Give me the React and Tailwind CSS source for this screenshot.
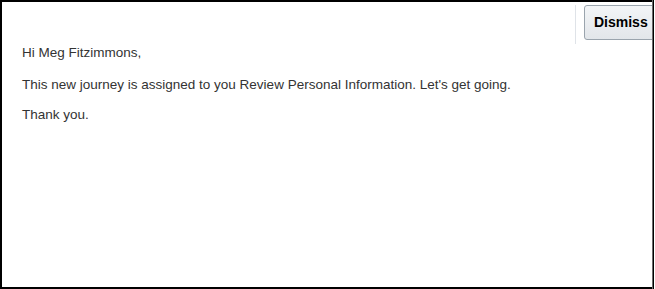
import React from "react";

const App = () => {
  return (
    <div className="w-[655px] h-[289px] bg-white flex font-['Liberation_Sans',Arial,sans-serif]">
      <div className="flex-1 flex border-l-2 border-t-2 border-b-2 border-black overflow-hidden">
        <div className="flex-1 pl-[20px] pt-[41px] text-[13.5px] leading-[20px] text-[#333333]">
          <p className="mb-[12px]">Hi Meg Fitzimmons,</p>
          <p className="mb-[10px]">
            This new journey is assigned to you Review Personal Information. Let's get going.
          </p>
          <p>Thank you.</p>
        </div>
        <div className="flex items-start">
          <div className="w-px h-[39px] mt-[3px] bg-[#dfe3e8]"></div>
          <button className="ml-[8px] mt-[3px] h-[35px] w-[74px] -mr-[6px] pl-[9px] text-left rounded-[3px] border border-[#9aa4ad] bg-gradient-to-b from-[#f3f5f7] to-[#e2e6ea] text-[14px] font-bold text-black">
            Dismiss
          </button>
        </div>
      </div>
      <div className="w-px bg-[#6b6b6b]"></div>
      <div className="w-px bg-black"></div>
      <div className="w-px bg-white"></div>
    </div>
  );
};

export default App;
